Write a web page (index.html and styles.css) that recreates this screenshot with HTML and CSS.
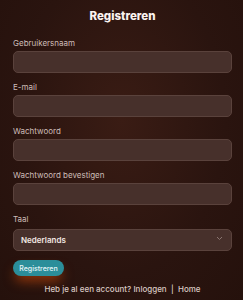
FILE: index.html
```html
<!DOCTYPE html>
<html lang="nl">
<head>
    <meta charset="UTF-8">
    <meta name="viewport" content="width=device-width, initial-scale=1.0">
    <title>Registreren</title>
    <link rel="stylesheet" href="styles.css">
</head>
<body>
<div class="register">
    <h1 class="title">Registreren</h1>
    <form class="form">
        <div class="field">
            <label for="username">Gebruikersnaam</label>
            <input type="text" id="username">
        </div>
        <div class="field">
            <label for="email">E-mail</label>
            <input type="email" id="email">
        </div>
        <div class="field">
            <label for="password">Wachtwoord</label>
            <input type="password" id="password">
        </div>
        <div class="field">
            <label for="password2">Wachtwoord bevestigen</label>
            <input type="password" id="password2">
        </div>
        <div class="field">
            <label for="lang">Taal</label>
            <div class="select-wrap">
                <select id="lang">
                    <option>Nederlands</option>
                    <option>English</option>
                </select>
                <svg class="chevron" width="7" height="5" viewBox="0 0 7 5"><path d="M1 1l2.5 2.5L6 1" fill="none" stroke="#8a7570" stroke-width="1"/></svg>
            </div>
        </div>
        <button type="button" class="submit">Registreren</button>
    </form>
    <p class="footer">Heb je al een account? <a href="#">Inloggen</a> &nbsp;|&nbsp; <a href="#">Home</a></p>
</div>
</body>
</html>
```

FILE: styles.css
```css
* {
    box-sizing: border-box;
    margin: 0;
    padding: 0;
    font-family: Inter, 'Noto Sans', sans-serif;
}

html, body {
    height: 100%;
}

body {
    background: radial-gradient(ellipse at 50% 40%, #3a1c14 0%, #2a140f 60%, #25110c 100%);
    color: #e8dcd8;
}

.register {
    padding: 7px 11px 0 13px;
}

.title {
    text-align: center;
    font-size: 11.5px;
    font-weight: 800;
    color: #fbf3f0;
    height: 19px;
    line-height: 19px;
}

.form {
    margin-top: 12px;
}

.field {
    display: flex;
    flex-direction: column;
    margin-bottom: 9px;
}

.field label {
    font-size: 8px;
    line-height: 11px;
    color: #cdbdb8;
    margin-bottom: 2px;
}

.field input,
.field select {
    width: 100%;
    height: 22px;
    background-color: #47302b;
    border: 1px solid #5a423c;
    border-radius: 5px;
    color: #f2e8e4;
    outline: none;
}

.select-wrap {
    position: relative;
}

.field select {
    appearance: none;
    -webkit-appearance: none;
    font-size: 8px;
    font-weight: 600;
    padding-left: 7px;
}

.chevron {
    position: absolute;
    right: 9px;
    top: 9px;
}

.submit {
    display: block;
    width: 51px;
    height: 16px;
    border: none;
    border-radius: 8px;
    background-color: #2b8e9a;
    color: #e6f5f7;
    font-size: 7px;
    font-weight: 500;
    box-shadow: 0 7px 12px -2px rgba(220, 80, 10, 0.6);
    cursor: pointer;
}

.footer {
    margin-top: 8px;
    text-align: center;
    font-size: 8px;
    line-height: 10px;
    font-weight: 500;
    color: #d9c8c2;
}

.footer a {
    color: #d9c8c2;
    text-decoration: none;
}
```
